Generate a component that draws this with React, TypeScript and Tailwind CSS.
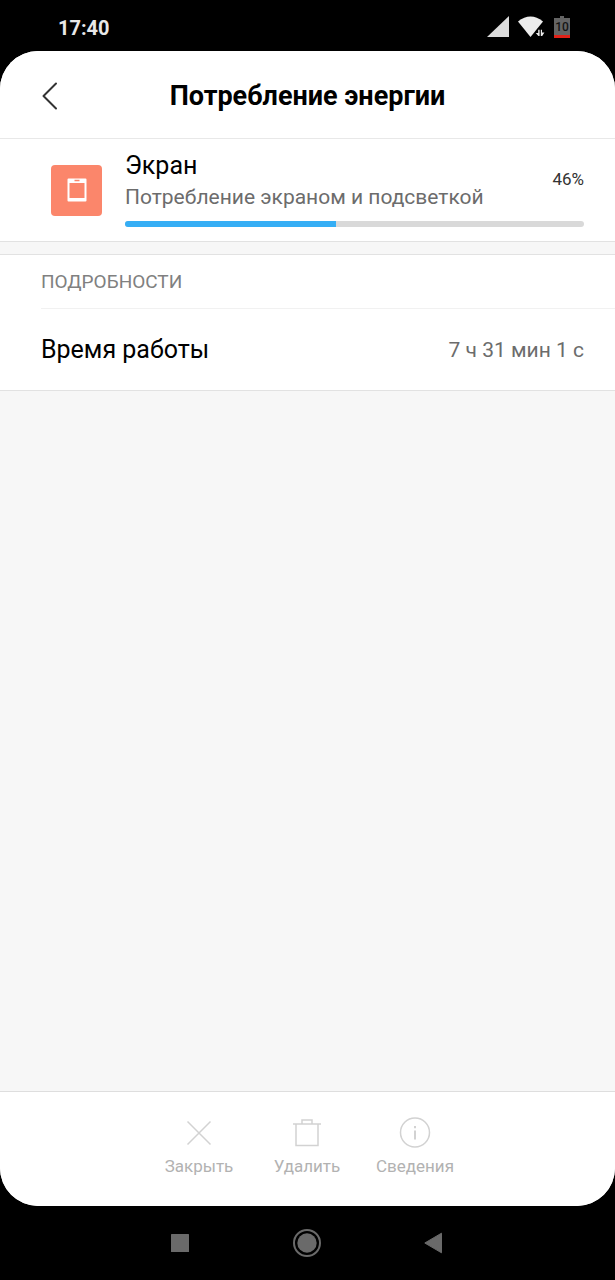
import React from 'react';

const usage = { name: 'Экран', description: 'Потребление экраном и подсветкой', percent: 46 };

function StatusBar() {
  return (
    <div className="flex h-[51px] shrink-0 items-center justify-between pr-[45px] pl-[58px] pt-1">
      <span className="text-[20px] leading-6 font-bold text-[#e8e8e8]">17:40</span>
      <div className="flex items-center gap-[9px] pb-0.5">
        <svg width="22" height="22" viewBox="0 0 22 22" aria-hidden="true">
          <path d="M22 0V21H0Z" fill="#dcdcdc" />
        </svg>
        <svg width="27" height="22" viewBox="0 0 27 22" aria-hidden="true">
          <path d="M0 5.5Q12.5-4.5 25 5.5L12.5 21Z" fill="#ececec" />
          <path d="M18 17L20.8 13H23L26 17L23 21H20.8Z" fill="#000" stroke="#000" strokeWidth="2" />
          <path d="M21.6 13.8V20H20.4L17.8 17H20.2V13.8ZM22.8 20V13.8H24V16.4H26.4L24.2 20Z" fill="#ececec" />
        </svg>
        <div className="relative flex h-[22px] w-4 items-center justify-center">
          <svg className="absolute inset-0" width="16" height="22" viewBox="0 0 16 22" aria-hidden="true">
            <path d="M6 0H10V2H16V19H0V2H6Z" fill="#646464" />
            <path d="M0 19H16V22H0Z" fill="#e02118" />
          </svg>
          <span className="relative text-[12px] leading-3 font-medium text-[#141414]">10</span>
        </div>
      </div>
    </div>
  );
}

function Action({ label, children }: { label: string; children: React.ReactNode }) {
  return (
    <button type="button" className="flex w-[108px] flex-col items-center gap-2 text-[#d2d2d2]">
      <svg width="32" height="32" viewBox="0 0 32 32" fill="none" stroke="currentColor" strokeWidth="1.5" aria-hidden="true">
        {children}
      </svg>
      <span className="text-[17px] leading-5 text-[#b2b2b2]">{label}</span>
    </button>
  );
}

export default function App() {
  return (
    <div className="flex min-h-screen flex-col bg-black font-[Roboto,sans-serif]">
      <StatusBar />
      <div className="flex grow flex-col overflow-hidden rounded-[38px] bg-[#f7f7f7]">
        <header className="grid h-[88px] grid-cols-[1fr_auto_1fr] items-center border-b border-[#e8e8e8] bg-white pt-0.5">
          <button type="button" aria-label="Назад" className="ml-[41px] w-5">
            <svg width="18" height="28" viewBox="0 0 18 28" fill="none" stroke="#333" strokeWidth="2" strokeLinecap="round" strokeLinejoin="round" aria-hidden="true">
              <path d="M15 1.5L2.5 14L15 26.5" />
            </svg>
          </button>
          <h1 className="text-[27px] leading-8 font-bold text-black">Потребление энергии</h1>
        </header>
        <main className="grow">
          <section className="flex h-[103px] items-center border-b border-[#e2e2e2] bg-white pr-[31px] pl-[51px]">
            <div className="flex size-[51px] shrink-0 items-center justify-center rounded-[4px] bg-[#fb866b]">
              <svg width="20" height="24" viewBox="0 0 20 24" aria-hidden="true">
                <path fillRule="evenodd" d="M1.5 0.5H18.5Q19.5 0.5 19.5 1.5V22.5Q19.5 23.5 18.5 23.5H1.5Q0.5 23.5 0.5 22.5V1.5Q0.5 0.5 1.5 0.5ZM2.5 5V20H17.5V5ZM7.5 1.8V3.3H12.5V1.8Z" fill="#fff" />
              </svg>
            </div>
            <div className="ml-[23px] grow self-start pt-[11px]">
              <div className="flex items-center justify-between">
                <div>
                  <h2 className="text-[25px] leading-8 text-black">{usage.name}</h2>
                  <p className="text-[21px] leading-[30px] text-[#6c6c6c]">{usage.description}</p>
                </div>
                <span className="pb-1 text-[17px] leading-5 text-[#333]">{usage.percent}%</span>
              </div>
              <div role="progressbar" aria-label={usage.name} aria-valuenow={usage.percent} className="mt-[9px] h-[6px] overflow-hidden rounded-[3px] bg-[#d9d9d9]">
                <div className="h-full bg-[#35aef5]" style={{ width: `${usage.percent}%` }} />
              </div>
            </div>
          </section>
          <section className="mt-3 border-y border-[#e2e2e2] bg-white pl-[41px]">
            <h3 className="flex h-[54px] items-center border-b border-[#f1f1f1] text-[19px] leading-6 text-[#808080]">ПОДРОБНОСТИ</h3>
            <dl className="flex h-[81px] items-center justify-between pr-[31px]">
              <dt className="text-[25px] leading-8 text-black">Время работы</dt>
              <dd className="text-[21px] leading-6 text-[#6c6c6c]">7 ч 31 мин 1 с</dd>
            </dl>
          </section>
        </main>
        <footer className="flex h-[115px] justify-center border-t border-[#dedede] bg-white pt-6 pr-px">
          <Action label="Закрыть">
            <path d="M4.5 5.5L27.5 28.5M27.5 5.5L4.5 28.5" />
          </Action>
          <Action label="Удалить">
            <path d="M2 8H30M5 8V29.5H27V8M11 8V4H21V8" />
          </Action>
          <Action label="Сведения">
            <circle cx="16" cy="16.5" r="14.5" />
            <path d="M16 14.5V23.5M16 10V12.2" strokeWidth="2" />
          </Action>
        </footer>
      </div>
      <nav className="flex h-[74px] shrink-0 items-center justify-center gap-[103px] pr-[3px]">
        <button type="button" aria-label="Недавние">
          <svg width="20" height="20" viewBox="0 0 20 20" aria-hidden="true">
            <rect x="1" y="1" width="18" height="18" rx="0.5" fill="#6a6a6a" />
          </svg>
        </button>
        <button type="button" aria-label="Домой">
          <svg width="28" height="28" viewBox="0 0 28 28" aria-hidden="true">
            <circle cx="14" cy="14" r="13" fill="none" stroke="#6a6a6a" strokeWidth="2" />
            <circle cx="14" cy="14" r="9.7" fill="#6a6a6a" />
          </svg>
        </button>
        <button type="button" aria-label="Назад">
          <svg width="18" height="22" viewBox="0 0 18 22" aria-hidden="true">
            <path d="M17.5 1.2V20.8L0.8 11Z" fill="#6a6a6a" stroke="#6a6a6a" strokeLinejoin="round" />
          </svg>
        </button>
      </nav>
    </div>
  );
}
